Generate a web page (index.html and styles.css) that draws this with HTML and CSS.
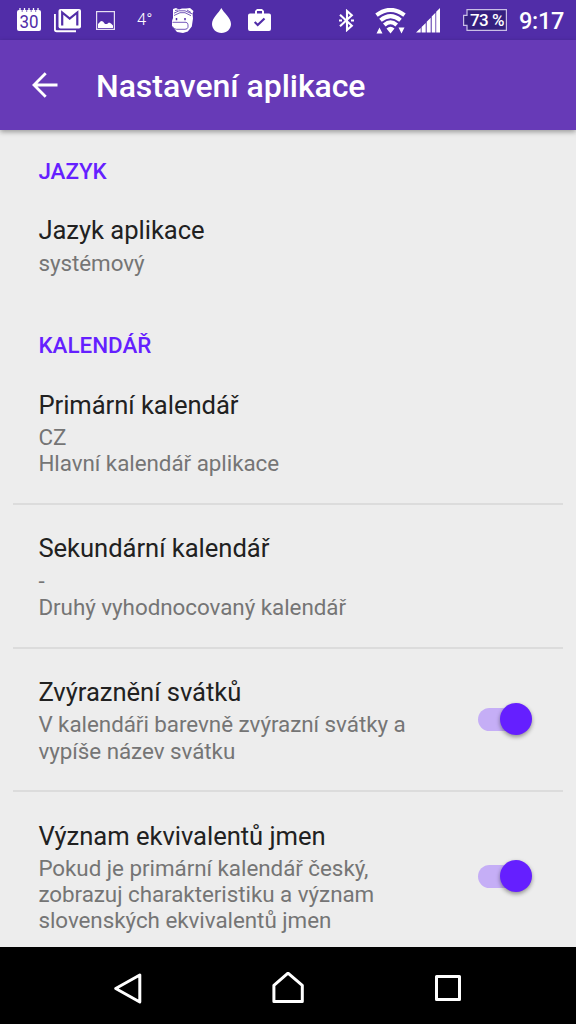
FILE: index.html
```html
<!DOCTYPE html>
<html lang="cs">
<head>
<meta charset="utf-8">
<title>Nastavení aplikace</title>
<link rel="stylesheet" href="styles.css">
</head>
<body>
<div class="screen">
  <div class="status">
    <div class="notices">
      <svg class="calendar" width="24" height="24" viewBox="0 0 24 24"><path fill="#fff" d="M2 2h20q2 0 2 2v17q0 2-2 2H2q-2 0-2-2V4q0-2 2-2z"/><path stroke="#fff" stroke-width="1.300" d="M3 0v3M7.500 0v3M12 0v3M16.500 0v3M21 0v3"/><path stroke="#512da8" stroke-width=".7" d="M5.200 1v3M9.700 1v3M14.200 1v3M18.700 1v3"/><text x="12" y="19.500" text-anchor="middle" font-size="19" textLength="19" lengthAdjust="spacingAndGlyphs" class="day">30</text></svg>
      <svg class="mail" width="27" height="24" viewBox="0 0 27 24"><path fill="none" stroke="#fff" stroke-width="1.900" d="M.9 5v15.500q0 1.700 1.700 1.700H22"/><rect x="4.500" y="0" width="22.500" height="19.500" rx="2" fill="#fff"/><path d="M8.200 16.500V3.500L15.700 9.500 23.300 3.500v13" fill="none" stroke="#512da8" stroke-width="2.200"/></svg>
      <svg class="photo" width="19" height="19" viewBox="0 0 19 19"><rect x=".6" y=".6" width="17.800" height="17.800" fill="none" stroke="#fff" stroke-opacity=".85" stroke-width="1.200"/><path fill="#fff" d="M2 17v-4l3-3 2 .5 2 2.500 2 0 2-1.500 2 1 2 2V17z"/></svg>
      <span class="temp">4°</span>
      <svg class="face" width="22" height="25" viewBox="0 0 22 25"><path fill="#fff" d="M1 5V1l3-1 3 1.500L10 .5h4L18 0l3.500 3-1 2.500.5 5-1.200 8-4 5L11 25l-6-1-2.500-3L0 18.500V13l1-3z"/><g fill="none" stroke="#512da8" stroke-width=".8"><path d="M2 5.200l5-2.400 6 0 7 3M2 7.500l6-2.800 5 0 6 3M3 2.500l3-.5M15 2l4 2.500"/><path d="M.5 14.300h13.500q2 .5 2 2.500v2.500q-.5 2-3 2H4.500q-3.500 0-4-3"/></g><path d="M4.500 10v2.300M13 10v2.300" stroke="#512da8" stroke-width="1.500"/></svg>
      <svg class="drop" width="19" height="25" viewBox="0 0 19 25"><path fill="#fff" d="M9.300 0C7 5 0 9.500 0 16c0 5 4.200 9 9.500 9s9.500-4 9.500-9C19 9.500 11.700 5 9.300 0z"/></svg>
      <svg class="case" width="23" height="22" viewBox="0 0 23 22"><path fill="#fff" fill-rule="evenodd" d="M9 0h5l2 2v2.500h5q2 0 2 2V20q0 2-2 2H2q-2 0-2-2V6.500q0-2 2-2h5V2zM9 4.500h5V2H9z"/><path d="M6.700 13l3 3 6.800-6.500" fill="none" stroke="#512da8" stroke-width="2.200"/></svg>
    </div>
    <div class="system">
      <svg class="bluetooth" width="15" height="23" viewBox="0 0 15 23"><path fill="none" stroke="#fff" stroke-width="2.100" d="M1 5.800L12.800 16.700 8 21V2l4.800 4.300L1 17.200"/><path stroke="#fff" stroke-width="2.200" d="M0 11.500h3M12 11.500h3"/></svg>
      <svg class="wifi" width="31" height="26" viewBox="0 0 31 26"><g fill="none" stroke="#fff" stroke-width="4"><path d="M1.500 7.200Q15.500-3.500 29.500 7.200"/><path d="M5.500 12.200Q15.500 4 25.500 12.200"/><path d="M9.300 17Q15.500 11.500 21.700 17"/></g><path fill="#fff" d="M11.500 20.500Q15.500 17 19.500 20.500L15.500 25.500zM1.500 25.500h6L4.500 19.500zM23.500 19.500h6l-3 6z"/></svg>
      <svg class="signal" width="24" height="25" viewBox="0 0 24 25"><path fill="#fff" d="M0 24.500L4.700 20v4.500zM5.600 18.900l4.100-4v9.600H5.600zM10.700 13.700l4-4v14.800h-4zM15.700 8.500l3.700-3.700v19.700h-3.700zM20.200 3.700L24 0v24.500h-3.800z"/></svg>
      <div class="battery"><svg width="44" height="22" viewBox="0 0 44 22"><path fill="#35207f" stroke="#c9bee6" stroke-width="1.200" d="M4 .6h39.400v20.800H4v-5H.6v-10H4z"/></svg><span class="charge">73 %</span></div>
      <span class="clock">9:17</span>
    </div>
  </div>
  <header class="toolbar">
    <svg class="back" width="26" height="26" viewBox="0 0 26 26"><path fill="none" stroke="#fff" stroke-width="2.800" d="M25.500 13H2M13.700 1.200L2 13l11.700 11.800"/></svg>
    <h1 class="heading">Nastavení aplikace</h1>
  </header>
  <main class="settings">
    <h2 class="section">JAZYK</h2>
    <div class="item"><div class="copy"><div class="name">Jazyk aplikace</div><div class="summary">systémový</div></div></div>
    <h2 class="section second">KALENDÁŘ</h2>
    <div class="item"><div class="copy"><div class="name">Primární kalendář</div><div class="summary">CZ<br>Hlavní kalendář aplikace</div></div></div>
    <div class="item divided"><div class="copy"><div class="name">Sekundární kalendář</div><div class="summary">-<br>Druhý vyhodnocovaný kalendář</div></div></div>
    <div class="item divided"><div class="copy"><div class="name">Zvýraznění svátků</div><div class="summary">V kalendáři barevně zvýrazní svátky a<br>vypíše název svátku</div></div><div class="switch"><div class="thumb"></div></div></div>
    <div class="item divided"><div class="copy"><div class="name">Význam ekvivalentů jmen</div><div class="summary">Pokud je primární kalendář český,<br>zobrazuj charakteristiku a význam<br>slovenských ekvivalentů jmen</div></div><div class="switch"><div class="thumb"></div></div></div>
  </main>
  <nav class="navbar">
    <svg width="32" height="32" viewBox="0 0 32 32"><path d="M3.700 16.500L27.800 3v27z"/></svg>
    <svg width="32" height="32" viewBox="0 0 32 32"><path d="M1.900 13.300L16 1.200l14.300 12.100v16.300H1.900z"/></svg>
    <svg width="32" height="32" viewBox="0 0 32 32"><path d="M4.500 4.500h23v23h-23z"/></svg>
  </nav>
</div>
</body>
</html>
```
FILE: styles.css
```css
* { box-sizing: border-box; }
body { margin: 0; font-family: Roboto, sans-serif; }
svg { display: block; flex: none; }
.screen { width: 576px; height: 1024px; display: flex; flex-direction: column; overflow: hidden; background: #ededed; }
.status { flex: none; height: 40px; display: flex; justify-content: space-between; background: #512da8; color: #fff; }
.notices, .system { display: flex; align-items: flex-start; white-space: nowrap; }
.notices { padding-left: 17px; }
.calendar { margin-top: 8px; }
.day { font-family: Roboto, sans-serif; font-weight: 400; fill: #512da8; }
.mail { margin: 9px 0 0 13px; }
.photo { margin: 11px 0 0 15px; }
.temp { margin: 10px 0 0 22px; width: 14px; font-size: 16.500px; line-height: 20px; font-weight: 300; }
.face { margin: 8px 0 0 21px; }
.drop { margin: 8px 0 0 18px; }
.case { margin: 9px 0 0 17px; }
.system { padding-right: 12px; }
.bluetooth { margin-top: 9px; }
.wifi { margin: 8px 0 0 21px; }
.signal { margin: 8px 0 0 10px; }
.battery { display: grid; margin: 9px 0 0 23px; }
.battery > * { grid-area: 1 / 1; }
.charge { padding-left: 4px; width: 44px; text-align: center; font-size: 17px; letter-spacing: -0.500px; font-weight: 500; line-height: 23px; }
.clock { margin: 7px 0 0 12px; width: 45px; font-size: 23.500px; letter-spacing: -0.300px; line-height: 28px; font-weight: 500; }
.toolbar { flex: none; z-index: 1; height: 89.600px; display: flex; align-items: center; padding-left: 32px; background: #673ab7; color: #fff; box-shadow: 0 2px 5px rgba(0,0,0,.35); }
.heading { margin: 3px 0 0 38px; font-size: 32px; line-height: 38px; font-weight: 500; letter-spacing: -0.050px; }
.settings { flex: 1; min-height: 0; overflow: hidden; }
.section { margin: 0; padding: 28.500px 0 0 38.400px; height: 85.600px; color: #651fff; font-size: 22.400px; line-height: 26.250px; font-weight: 500; }
.second { padding-top: 29.500px; height: 87.600px; }
.item { display: flex; align-items: center; margin: 0 12.800px; padding: 0 31.200px 26.400px 25.600px; }
.divided { border-top: 2px solid #dcdcdc; padding-top: 28.400px; }
.copy { flex: 1; white-space: nowrap; letter-spacing: -0.040px; }
.name { font-size: 25.600px; line-height: 30px; color: #212121; }
.summary { margin-top: 4.400px; font-size: 22.400px; line-height: 26.200px; color: #757575; }
.switch { width: 54px; height: 32px; margin-bottom: 2px; display: flex; justify-content: flex-end; }
.switch::before { content: ""; align-self: center; width: 46px; height: 23px; margin-right: -24px; border-radius: 12px; background: #c5aef6; }
.thumb { width: 32px; height: 32px; border-radius: 50%; background: #651fff; box-shadow: 0 2px 4px rgba(0,0,0,.4); z-index: 1; }
.navbar { flex: none; height: 77px; display: flex; justify-content: center; gap: 128px; padding-top: 25px; background: #000; }
.navbar path { fill: none; stroke: #fff; stroke-width: 3; stroke-linejoin: round; }
```
